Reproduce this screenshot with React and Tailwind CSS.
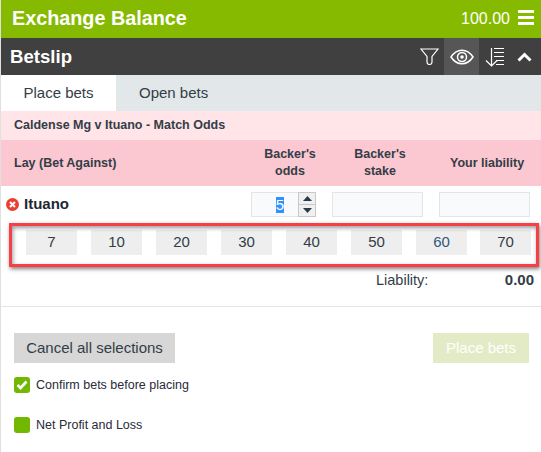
import React from "react";

const stakes = ["7", "10", "20", "30", "40", "50", "60", "70"];

function Filter() {
  return (
    <svg width="19" height="17" viewBox="0 0 19 17" fill="none" stroke="#fff" strokeWidth="1.200">
      <path d="M1 1h17l-6 7.500v5.500a2.500 2.500 0 0 1-5 0V8.500z" />
    </svg>
  );
}
function Eye() {
  return (
    <svg width="24" height="16" viewBox="0 0 24 16" fill="none" stroke="#fff">
      <path d="M1 8c3-4.500 7-6.800 11-6.800S20 3.500 23 8c-3 4.500-7 6.800-11 6.800S4 12.500 1 8z" strokeWidth="1.500" />
      <circle cx="12" cy="8" r="4.500" strokeWidth="1.500" />
      <circle cx="12" cy="8" r="1.800" fill="#fff" stroke="none" />
    </svg>
  );
}
function SortIcon() {
  return (
    <svg width="20" height="20" viewBox="0 0 20 20" fill="none" stroke="#fff" strokeWidth="1.200">
      <path d="M6.500 1v18M1 13.500l5.500 5.500 5.500-5.500" />
      <path d="M9 1.500h10M9 5.500h10M9 9.500h10M11 13.500h8M11 17.500h8" />
    </svg>
  );
}

export default function App() {
  return (
    <div className="relative w-[541px] h-[452px] bg-white overflow-hidden border-l border-[#e0e0e0] text-[#333d47] font-['Liberation_Sans',Arial,sans-serif]">
      <div className="h-[38px] bg-[#85ba00] text-white flex items-center justify-between pl-[11px] pr-[7px]">
        <span className="text-[19.800px] font-bold">Exchange Balance</span>
        <div className="flex items-center gap-[8px]">
          <span className="text-[16px]">100.00</span>
          <div className="flex flex-col gap-[3px] w-[16px] -mt-[3px]">
            <div className="h-[3px] bg-white" />
            <div className="h-[3px] bg-white" />
            <div className="h-[3px] bg-white" />
          </div>
        </div>
      </div>

      <div className="h-[37px] bg-[#404040] text-white flex items-center justify-between pl-[9px]">
        <span className="text-[18.600px] font-bold">Betslip</span>
        <div className="flex items-stretch h-full">
          <div className="w-[24px] flex items-center justify-center mr-[3px]"><Filter /></div>
          <div className="w-[35px] bg-[#565656] flex items-center justify-center"><Eye /></div>
          <div className="w-[31px] flex items-center justify-center"><SortIcon /></div>
          <div className="w-[31px] flex items-center pl-[7px]">
            <svg width="15" height="10" viewBox="0 0 15 10" fill="none" stroke="#fff" strokeWidth="3">
              <path d="M1.500 8.500l6-6 6 6" />
            </svg>
          </div>
        </div>
      </div>

      <div className="h-[36px] bg-[#e2e8e9] flex text-[15px]">
        <div className="w-[115px] bg-white flex items-center justify-center">Place bets</div>
        <div className="pl-[23px] flex items-center">Open bets</div>
      </div>

      <div className="h-[29px] bg-[#ffe4e8] flex items-center pl-[13px] text-[12.500px] font-bold">
        Caldense Mg v Ituano - Match Odds
      </div>

      <div className="h-[46px] bg-[#fbc7d0] flex items-center text-[12.500px] font-bold leading-[17px] text-center">
        <div className="w-[239px] text-left pl-[13px]">Lay (Bet Against)</div>
        <div className="w-[100px]">Backer's<br />odds</div>
        <div className="w-[80px]">Backer's<br />stake</div>
        <div className="flex-1 pl-[30px] text-left">Your liability</div>
      </div>

      <div className="h-[37px] flex items-center">
        <div className="w-[250px] flex items-center pl-[5px] gap-[5px]">
          <div className="w-[13px] h-[13px] rounded-full bg-[#e8402e] flex items-center justify-center">
            <svg width="7" height="7" viewBox="0 0 7 7" stroke="#fff" strokeWidth="2">
              <path d="M1 1l5 5M6 1L1 6" />
            </svg>
          </div>
          <span className="text-[15px] font-bold text-[#1f2733]">Ituano</span>
        </div>
        <div className="w-[65px] h-[25px] flex border border-[#e3e6e8] bg-[#f8fafc]">
          <div className="w-[46px] flex items-center justify-end pr-[14px] text-[15px]">
            <span className="bg-[#3390ff] text-white leading-[16px]">5</span>
          </div>
          <div className="w-[18px] flex flex-col -my-px -mr-px border border-[#c8c8c8] bg-[#f0f0f0]">
            <div className="flex-1 flex items-center justify-center border-b border-[#c8c8c8]">
              <svg width="9" height="5" viewBox="0 0 9 5"><path d="M0 5L4.500 0 9 5z" fill="#2d3a44" /></svg>
            </div>
            <div className="flex-1 flex items-center justify-center">
              <svg width="9" height="5" viewBox="0 0 9 5"><path d="M0 0l4.500 5L9 0z" fill="#2d3a44" /></svg>
            </div>
          </div>
        </div>
        <div className="ml-[16px] w-[91px] h-[25px] border border-[#e3e6e8] bg-[#f8fafc]" />
        <div className="ml-[16px] w-[91px] h-[25px] border border-[#e3e6e8] bg-[#f8fafc]" />
      </div>

      <div className="h-[46px] flex items-start pt-[7px] pl-[25px] gap-[14px] text-[15px]">
        {stakes.map((s) => (
          <div key={s} className={`w-[51px] h-[25px] bg-[#eeeeee] flex items-center justify-center ${s === "70" ? "-ml-px" : ""} ${s === "60" ? "text-[#33587c]" : ""}`}>
            {s}
          </div>
        ))}
      </div>

      <div className="h-[38px] flex items-start border-b border-[#e4e4e4] text-[14.500px] leading-[22px]">
        <div className="ml-[375px] w-[100px]">Liability:</div>
        <div className="w-[58px] text-right font-bold text-[15px]">0.00</div>
      </div>

      <div className="flex justify-between items-start pt-[26px] pl-[13px] pr-[12px]">
        <div className="w-[161px] h-[30px] bg-[#d7d7d7] flex items-center justify-center text-[15px]">Cancel all selections</div>
        <div className="w-[96px] h-[30px] bg-[#e2ebc5] flex items-center justify-center text-[15px] text-white">Place bets</div>
      </div>

      <div className="mt-[11px] pl-[13px] flex items-center gap-[6px] text-[12.500px] h-[22px] text-[#2a2a3a]">
        <div className="w-[16px] h-[16px] rounded-[3px] bg-[#71b800] flex items-center justify-center">
          <svg width="12" height="10" viewBox="0 0 12 10" fill="none" stroke="#fff" strokeWidth="2.600">
            <path d="M1.500 5l3 3 6-6.500" />
          </svg>
        </div>
        Confirm bets before placing
      </div>
      <div className="mt-[18px] pl-[13px] flex items-center gap-[6px] text-[12.500px] h-[22px] text-[#2a2a3a]">
        <div className="w-[16px] h-[16px] rounded-[3px] bg-[#71b800]" />
        Net Profit and Loss
      </div>

      <div className="absolute left-[8px] top-[223px] w-[530px] h-[44px] border-[3px] border-[#f64045] shadow-[1px_2px_4px_rgba(0,0,0,0.5),inset_1px_2px_4px_rgba(0,0,0,0.4)]" />
    </div>
  );
}
